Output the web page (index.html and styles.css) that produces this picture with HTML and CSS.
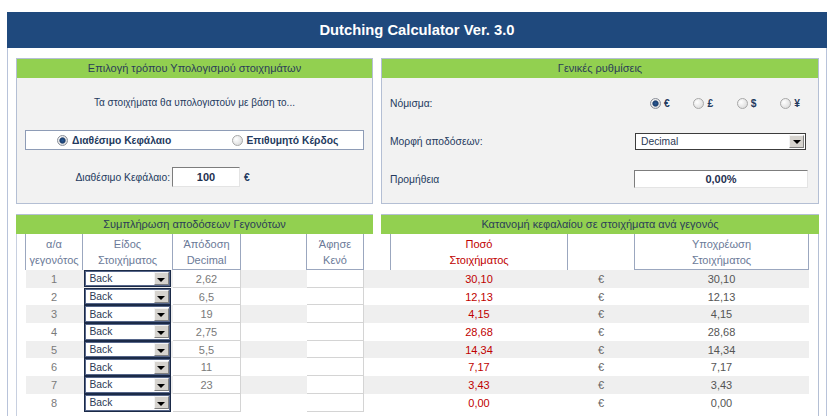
FILE: index.html
```html
<!DOCTYPE html>
<html lang="el">
<head>
    <meta charset="UTF-8">
    <meta name="viewport" content="width=device-width, initial-scale=1.0">
    <title>Dutching Calculator Ver. 3.0</title>
    <link rel="stylesheet" href="styles.css">
</head>
<body>
    <div class="frame">
        <div class="title-bar">Dutching Calculator Ver. 3.0</div>
        <div class="content">
            <div class="columns top">
                <section class="panel">
                    <h2 class="panel-head">Επιλογή τρόπου Υπολογισμού στοιχημάτων</h2>
                    <div class="panel-body basis-body">
                        <p class="intro">Τα στοιχήματα θα υπολογιστούν με βάση το...</p>
                        <div class="basis">
                            <label class="basis-capital"><input type="radio" name="basis" checked> Διαθέσιμο Κεφάλαιο</label>
                            <label class="basis-profit"><input type="radio" name="basis"> Επιθυμητό Κέρδος</label>
                        </div>
                        <div class="capital">
                            <span class="capital-label">Διαθέσιμο Κεφάλαιο:</span>
                            <input class="field capital-input" type="text" value="100" readonly>
                            <span class="capital-cur">€</span>
                        </div>
                    </div>
                </section>
                <section class="panel">
                    <h2 class="panel-head">Γενικές ρυθμίσεις</h2>
                    <div class="panel-body settings">
                        <div class="setting">
                            <span>Νόμισμα:</span>
                            <div class="currencies">
                                <label><input type="radio" name="cur" checked> €</label>
                                <label><input type="radio" name="cur"> £</label>
                                <label><input type="radio" name="cur"> $</label>
                                <label><input type="radio" name="cur"> ¥</label>
                            </div>
                        </div>
                        <div class="setting">
                            <span>Μορφή αποδόσεων:</span>
                            <div class="dropdown format"><span>Decimal</span><span class="arrow"></span></div>
                        </div>
                        <div class="setting">
                            <span>Προμήθεια</span>
                            <input class="field commission" type="text" value="0,00%" readonly>
                        </div>
                    </div>
                </section>
            </div>

            <div class="columns heads">
                <h2 class="panel-head">Συμπλήρωση αποδόσεων Γεγονότων</h2>
                <h2 class="panel-head">Κατανομή κεφαλαίου σε στοιχήματα ανά γεγονός</h2>
            </div>
            <div class="events-wrap">
                <table class="events">
                    <colgroup>
                        <col style="width:57px"><col style="width:90px"><col style="width:68px">
                        <col style="width:66px"><col style="width:57px"><col style="width:27px">
                        <col style="width:177px"><col style="width:67px"><col style="width:174px">
                    </colgroup>
                    <thead>
                        <tr>
                            <th class="h-num">α/α<br>γεγονότος</th>
                            <th class="h-type">Είδος<br>Στοιχήματος</th>
                            <th class="h-box">Άπόδοση<br>Decimal</th>
                            <th></th>
                            <th class="h-box">Άφησε<br>Κενό</th>
                            <th></th>
                            <th class="h-stake">Ποσό<br>Στοιχήματος</th>
                            <th></th>
                            <th class="h-box">Υποχρέωση<br>Στοιχήματος</th>
                        </tr>
                    </thead>
                    <tbody id="rows"></tbody>
                </table>
            </div>
        </div>
    </div>

    <script>
        const events = [
            { odds: '2,62', stake: '30,10' },
            { odds: '6,5', stake: '12,13' },
            { odds: '19', stake: '4,15' },
            { odds: '2,75', stake: '28,68' },
            { odds: '5,5', stake: '14,34' },
            { odds: '11', stake: '7,17' },
            { odds: '23', stake: '3,43' },
            { odds: '', stake: '0,00' },
        ];

        document.querySelector('#rows').innerHTML = events.map((ev, i) => `
            <tr>
                <td class="num">${i + 1}</td>
                <td class="type"><div class="dropdown pick"><span>Back</span><span class="arrow"></span></div></td>
                <td class="cell-box">${ev.odds}</td>
                <td></td>
                <td class="cell-box"></td>
                <td></td>
                <td class="stake">${ev.stake}</td>
                <td class="cur">€</td>
                <td class="liability">${ev.stake}</td>
            </tr>
        `).join('');
    </script>
</body>
</html>
```

FILE: styles.css
```css
body {
    margin: 0;
    font-family: 'Liberation Sans', Arial, sans-serif;
    font-size: 10.3px;
    color: #243a5e;
    background-color: #fff;
}
.frame {
    width: 820px;
    margin: 12px 0 0 7px;
}
.title-bar {
    height: 36px;
    background-color: #1f497d;
    color: #fff;
    font-size: 14.75px;
    font-weight: bold;
    display: flex;
    align-items: center;
    justify-content: center;
}
.content {
    border-left: 1px solid #b8c3da;
    border-right: 1px solid #b8c3da;
    padding: 10px 7px 0 8px;
}
.columns {
    display: grid;
    grid-template-columns: 357px 438px;
    column-gap: 8px;
}
.panel {
    height: 146px;
    box-sizing: border-box;
    border: 1px solid #b4bfd4;
    background-color: #f2f2f2;
}
.panel-head {
    margin: 0;
    height: 19px;
    line-height: 19px;
    background-color: #92d050;
    font-size: 11px;
    font-weight: normal;
    text-align: center;
    color: #2b3d58;
}
.basis-body {
    padding: 17px 8px 0;
}
.intro {
    margin: 0;
    line-height: 16px;
    font-size: 10px;
    text-align: center;
}
.basis {
    margin-top: 19px;
    height: 20px;
    box-sizing: border-box;
    border: 1px solid #8e9cb6;
    background-color: #fff;
    display: grid;
    grid-template-columns: 1fr 1fr;
    align-items: center;
}
.basis label,
.currencies label {
    display: flex;
    align-items: center;
    gap: 4px;
    font-weight: bold;
}
.basis-capital {
    padding-left: 31px;
}
.basis-profit {
    padding-left: 37px;
}
input[type="radio"] {
    appearance: none;
    -webkit-appearance: none;
    width: 11px;
    height: 11px;
    margin: 0;
    border-radius: 50%;
    border: 1px solid #a8a8a8;
    background: radial-gradient(circle at 35% 35%, #fff, #d4d4d4);
}
input[type="radio"]:checked {
    border-color: #8a8f99;
    background: radial-gradient(circle, #2a5a96 0, #1c3f6e 2.6px, #9aa6b8 3.2px, transparent 3.6px),
                radial-gradient(circle at 35% 35%, #fff, #cfcfcf);
}
.capital {
    margin-top: 17px;
    display: flex;
    align-items: center;
}
.capital-label {
    width: 145px;
    padding-right: 2px;
    text-align: right;
}
.field {
    box-sizing: border-box;
    margin: 0;
    padding: 0;
    font: bold 11px 'Liberation Sans', Arial, sans-serif;
    color: #1f3050;
    text-align: center;
    background-color: #fff;
    border: 1px solid;
    border-color: #7d7d7d #e4e4e4 #e4e4e4 #7d7d7d;
    outline: none;
}
.capital-input {
    width: 68px;
    height: 20px;
}
.capital-cur {
    margin-left: 4px;
    font-weight: bold;
}
.settings {
    padding: 6px 10px 0 8px;
}
.setting {
    height: 38px;
    display: grid;
    grid-template-columns: 1fr 174px;
    align-items: center;
}
.currencies {
    display: flex;
    justify-content: space-between;
    padding: 0 8px 0 16px;
}
.currencies label {
    gap: 3px;
}
.dropdown {
    display: flex;
    align-items: center;
    box-sizing: border-box;
    background-color: #fff;
    color: #2b3a55;
}
.dropdown .arrow {
    margin-left: auto;
    width: 15px;
    height: 13px;
    box-sizing: border-box;
    border: 1px solid;
    border-color: #f4f4f4 #808080 #808080 #f4f4f4;
    background-color: #d6d3ce;
    display: flex;
    align-items: center;
    justify-content: center;
}
.dropdown .arrow::after {
    content: '';
    margin-top: 2px;
    border-top: 4px solid #000;
    border-left: 4px solid transparent;
    border-right: 4px solid transparent;
}
.format {
    height: 17px;
    margin-left: 1px;
    width: 171px;
    padding: 0 1px 0 5px;
    border: 1px solid #3c3c3c;
}
.commission {
    width: 174px;
    height: 18px;
}
.heads {
    margin-top: 10px;
}
.heads .panel-head {
    height: 20px;
    border-top: 1px solid #b4bfd4;
    box-sizing: border-box;
}
.events-wrap {
    border-left: 1px solid #c8d0e0;
    border-right: 1px solid #b4bfd4;
    padding-left: 8px;
    height: 200px;
}
.events {
    width: 783px;
    table-layout: fixed;
    border-collapse: collapse;
    font-size: 11px;
}
.events th {
    height: 35px;
    padding: 0;
    line-height: 16px;
    font-weight: normal;
    color: #6b7a98;
}
.h-num {
    border-left: 1px solid #9ba7bf;
    border-right: 1px solid #9ba7bf;
}
.h-type {
    border-right: 1px solid #9ba7bf;
}
.h-box {
    border: 1px solid #9ba7bf;
    border-top: none;
}
.h-stake {
    color: #c00000 !important;
    border-left: 1px solid #9ba7bf;
    border-right: 1px solid #9ba7bf;
}
.events td {
    height: 17.7px;
    padding: 0;
    text-align: center;
    color: #7a7a7a;
}
.events tbody tr:nth-child(odd) {
    background-color: #efefef;
}
.events td.type {
    padding: 0 2px 0 1px;
}
.pick {
    height: 17.7px;
    padding: 0 1px 0 5px;
    border: 1px solid #1b2a47;
    box-shadow: inset 0 0 0 1px #56668a;
    text-align: left;
    font-size: 10.3px;
}
.events td.cell-box {
    background-color: #fff;
    box-shadow: inset -1px -1px 0 #d4d4d4;
}
.events td.stake {
    color: #c00000;
}
.events td.cur {
    color: #666;
}
.events td.liability {
    color: #555;
}
```
